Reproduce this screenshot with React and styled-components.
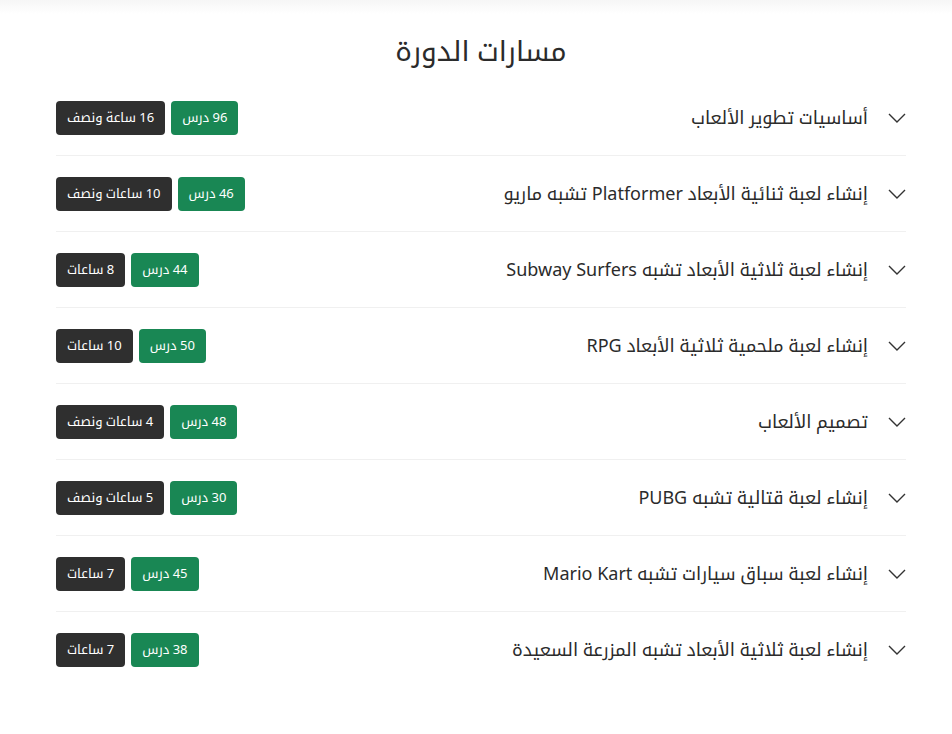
import styled, { createGlobalStyle } from "styled-components";

const tracks = [
  { title: "أساسيات تطوير الألعاب", lessons: "96 درس", hours: "16 ساعة ونصف" },
  { title: "إنشاء لعبة ثنائية الأبعاد Platformer تشبه ماريو", lessons: "46 درس", hours: "10 ساعات ونصف" },
  { title: "إنشاء لعبة ثلاثية الأبعاد تشبه Subway Surfers", lessons: "44 درس", hours: "8 ساعات" },
  { title: "إنشاء لعبة ملحمية ثلاثية الأبعاد RPG", lessons: "50 درس", hours: "10 ساعات" },
  { title: "تصميم الألعاب", lessons: "48 درس", hours: "4 ساعات ونصف" },
  { title: "إنشاء لعبة قتالية تشبه PUBG", lessons: "30 درس", hours: "5 ساعات ونصف" },
  { title: "إنشاء لعبة سباق سيارات تشبه Mario Kart", lessons: "45 درس", hours: "7 ساعات" },
  { title: "إنشاء لعبة ثلاثية الأبعاد تشبه المزرعة السعيدة", lessons: "38 درس", hours: "7 ساعات" },
];

const Chevron = () => (
  <svg viewBox="0 0 18 10" width="18" height="10" fill="none" stroke="#333" strokeWidth="1.4">
    <path d="M1 1l8 8 8-8" />
  </svg>
);

const App = () => {
  return (
    <>
      <GlobalStyle />
      <TopShade />
      <Container dir="rtl">
        <Heading>مسارات الدورة</Heading>
        <List>
          {tracks.map((t) => (
            <Row key={t.title}>
              <Toggle>
                <Chevron />
              </Toggle>
              <Title>{t.title}</Title>
              <Badges>
                <Badge $variant="green">{t.lessons}</Badge>
                <Badge $variant="dark">{t.hours}</Badge>
              </Badges>
            </Row>
          ))}
        </List>
      </Container>
    </>
  );
};

export default App;

const GlobalStyle = createGlobalStyle`
  body {
    margin: 0;
    background: #fff;
    font-family: "Noto Sans", "Noto Kufi Arabic", "Noto Sans Arabic", sans-serif;
    color: #212529;
  }
`;

const TopShade = styled.div`
  height: 14px;
  background: linear-gradient(to bottom, #f6f6f6, #fff);
`;

const Container = styled.div`
  padding: 16px 46px 0 56px;
`;

const Heading = styled.h2`
  margin: 0 0 10px;
  text-align: center;
  font-size: 28px;
  font-weight: 400;
  line-height: 40px;
  color: #2b2b2b;
`;

const List = styled.div`
  display: flex;
  flex-direction: column;
`;

const Row = styled.div`
  display: flex;
  align-items: center;
  height: 75px;
  border-bottom: 1px solid #f0f0f0;
  &:last-child {
    border-bottom: none;
  }
`;

const Toggle = styled.span`
  display: flex;
  align-items: center;
  width: 18px;
  margin-left: 20px;
`;

const Title = styled.div`
  font-size: 18px;
  color: #2b2b2b;
`;

const Badges = styled.div`
  display: flex;
  gap: 6px;
  margin-right: auto;
`;

const Badge = styled.span`
  display: inline-flex;
  align-items: center;
  height: 34px;
  padding: 0 11px;
  border-radius: 4px;
  font-size: 13px;
  color: #fff;
  background: ${(p) => (p.$variant === "green" ? "#198754" : "#2f2f2f")};
`;
